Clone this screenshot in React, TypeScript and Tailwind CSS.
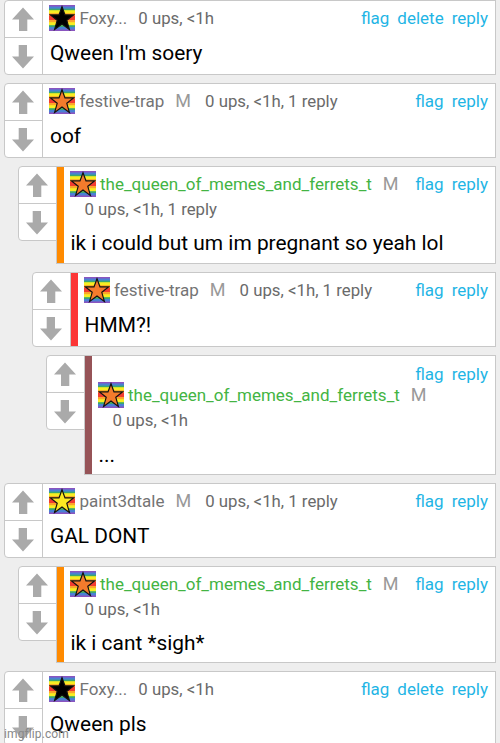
import clsx from "clsx";

interface Comment {
  user: string;
  star: string;
  mod?: boolean;
  green?: boolean;
  stats: string;
  text: string;
  canDelete?: boolean;
  // "inline": everything on one line, "stats": stats drop below, "all": name drops below the links too
  wrap: "inline" | "stats" | "all";
  indent: string;
  bar?: string;
  height: string;
}

const comments: Comment[] = [
  { user: "Foxy...", star: "#000000", stats: "0 ups, <1h", text: "Qween I'm soery", canDelete: true, wrap: "inline", indent: "ml-[4px]", height: "h-[75px]" },
  { user: "festive-trap", star: "#f47b2c", mod: true, stats: "0 ups, <1h, 1 reply", text: "oof", wrap: "inline", indent: "ml-[4px]", height: "h-[75px]" },
  { user: "the_queen_of_memes_and_ferrets_t", star: "#f47b2c", mod: true, green: true, stats: "0 ups, <1h, 1 reply", text: "ik i could but um im pregnant so yeah lol", wrap: "stats", indent: "ml-[18px]", bar: "bg-[#ff8a00]", height: "h-[98px]" },
  { user: "festive-trap", star: "#f47b2c", mod: true, stats: "0 ups, <1h, 1 reply", text: "HMM?!", wrap: "inline", indent: "ml-[32px]", bar: "bg-[#fc3636]", height: "h-[75px]" },
  { user: "the_queen_of_memes_and_ferrets_t", star: "#f47b2c", mod: true, green: true, stats: "0 ups, <1h", text: "...", wrap: "all", indent: "ml-[46px]", bar: "bg-[#965357]", height: "h-[120px]" },
  { user: "paint3dtale", star: "#fbe922", mod: true, stats: "0 ups, <1h, 1 reply", text: "GAL DONT", wrap: "inline", indent: "ml-[4px]", height: "h-[75px]" },
  { user: "the_queen_of_memes_and_ferrets_t", star: "#f47b2c", mod: true, green: true, stats: "0 ups, <1h", text: "ik i cant *sigh*", wrap: "stats", indent: "ml-[18px]", bar: "bg-[#ff8a00]", height: "h-[97px]" },
  { user: "Foxy...", star: "#000000", stats: "0 ups, <1h", text: "Qween pls", canDelete: true, wrap: "inline", indent: "ml-[4px]", height: "h-[75px]" },
];

// [y, colour], each stripe runs down to the next one
const stripes: [number, string][] = [
  [0, "#8a55c0"],
  [1.5, "#4a80d4"],
  [3.6, "#3aa870"],
  [5.2, "#f8ee22"],
  [8.2, "#fba52a"],
  [10.4, "#f23c30"],
  [15, "#fba52a"],
  [17.2, "#f8ee22"],
  [20.2, "#3aa870"],
  [22, "#4a80d4"],
  [24.4, "#8a55c0"],
];

function Avatar({ star }: { star: string }) {
  return (
    <svg viewBox="0 0 26 26" className="size-[26px] shrink-0">
      {stripes.map(([y, color]) => (
        <rect key={y} y={y} width="26" height={26 - y} fill={color} />
      ))}
      <path
        d="M13 1.8L16 9.9H24.6L17.8 15.3L20.4 24.4L13 19.1L5.6 24.4L8.2 15.3L1.4 9.9H10Z"
        fill={star}
        stroke="#111"
        strokeWidth="1.2"
      />
    </svg>
  );
}

function Arrow({ down }: { down?: boolean }) {
  return (
    <svg viewBox="0 0 22 24" className={clsx("h-6 w-[22px]", down && "rotate-180")}>
      <path d="M11 0.5L22 12.5H15.3V24H7V12.5H0Z" fill="#aaaaaa" />
    </svg>
  );
}

function Votes() {
  return (
    <div className="flex h-[75px] w-[39px] shrink-0 flex-col rounded-l border border-[#c8c8c8] bg-white">
      <div className="flex h-[37px] items-center justify-center border-b border-[#c8c8c8] pr-px">
        <Arrow />
      </div>
      <div className="flex h-[36px] items-center justify-center pr-px pt-px">
        <Arrow down />
      </div>
    </div>
  );
}

function Links({ canDelete }: { canDelete?: boolean }) {
  return (
    <div className="ml-auto flex gap-[8px] text-[#1fb5e5]">
      <a>flag</a>
      {canDelete && <a>delete</a>}
      <a>reply</a>
    </div>
  );
}

function CommentRow({ comment }: { comment: Comment }) {
  const { user, star, mod, green, stats, text, canDelete, wrap, indent, bar, height } = comment;
  return (
    <article className={clsx("mr-[4px] flex shrink-0 items-start", indent, height)}>
      <Votes />
      <div className="-ml-px flex h-full min-w-0 flex-1 border border-[#c8c8c8] bg-white">
        {bar && <div className={clsx("w-[7px] shrink-0", bar)} />}
        <div className={clsx("min-w-0 flex-1 pr-[7px] pt-1", bar ? "pl-[5.5px]" : "pl-[6px]")}>
          {wrap === "all" && (
            <div className="flex h-[22px] items-center pt-[6px]">
              <Links />
            </div>
          )}
          <div className="flex h-[26px] items-center whitespace-nowrap leading-[24px]">
            <Avatar star={star} />
            <span className={clsx("ml-[4.5px]", green ? "text-[#43b443]" : "text-[#747474]")}>{user}</span>
            {mod && <span className="ml-[11px] text-[18px] text-[#999]">M</span>}
            {wrap === "inline" && <span className={clsx("text-[16.8px]", mod ? "ml-[14px]" : "ml-[11px]")}>{stats}</span>}
            {wrap !== "all" && <Links canDelete={canDelete} />}
          </div>
          {wrap !== "inline" && <div className="h-[22px] pl-[15px] text-[16.8px] leading-[24px]">{stats}</div>}
          <p
            className={clsx(
              "whitespace-nowrap pl-px text-[20.9px] leading-[28px] text-black",
              wrap === "inline" ? "mt-[8px]" : wrap === "stats" ? "mt-[10px]" : "mt-[11px]"
            )}
          >
            {text}
          </p>
        </div>
      </div>
    </article>
  );
}

export default function App() {
  return (
    <main className="relative flex h-[743px] w-[500px] flex-col gap-2 overflow-hidden bg-[#eeeeee] font-['Roboto',sans-serif] text-[17px] leading-[22px] text-[#6a6a6a]">
      {comments.map((comment, i) => (
        <CommentRow key={i} comment={comment} />
      ))}
      <span className="absolute bottom-0 left-1 text-[12px] leading-[18px] tracking-[0.1px] text-[#888]">imgflip.com</span>
    </main>
  );
}
